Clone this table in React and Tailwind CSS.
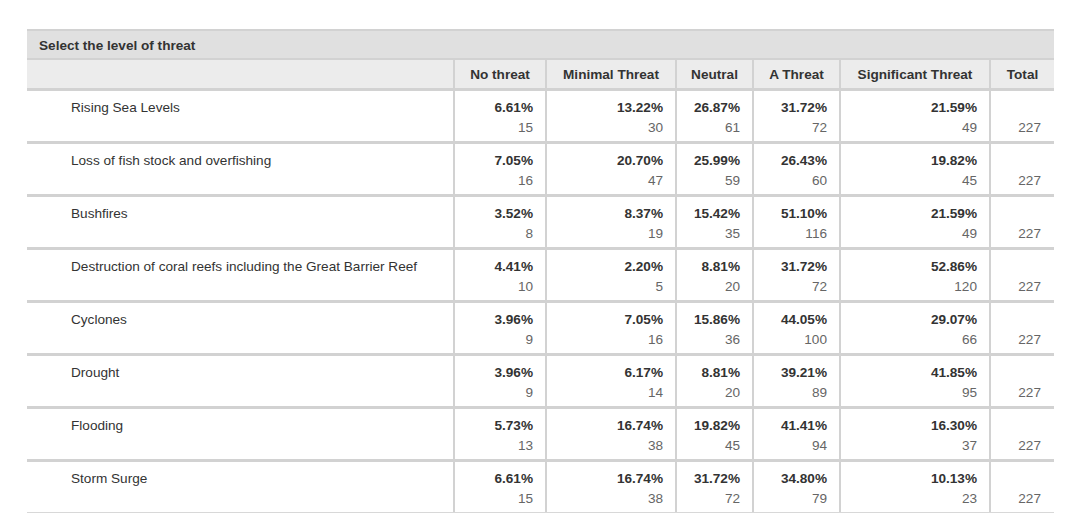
import React from "react";

// Survey results: one row per threat, with percentage + count per answer.
const columns = ["No threat", "Minimal Threat", "Neutral", "A Threat", "Significant Threat"];

const rows = [
  { label: "Rising Sea Levels", pct: ["6.61%", "13.22%", "26.87%", "31.72%", "21.59%"], n: [15, 30, 61, 72, 49] },
  { label: "Loss of fish stock and overfishing", pct: ["7.05%", "20.70%", "25.99%", "26.43%", "19.82%"], n: [16, 47, 59, 60, 45] },
  { label: "Bushfires", pct: ["3.52%", "8.37%", "15.42%", "51.10%", "21.59%"], n: [8, 19, 35, 116, 49] },
  { label: "Destruction of coral reefs including the Great Barrier Reef", pct: ["4.41%", "2.20%", "8.81%", "31.72%", "52.86%"], n: [10, 5, 20, 72, 120] },
  { label: "Cyclones", pct: ["3.96%", "7.05%", "15.86%", "44.05%", "29.07%"], n: [9, 16, 36, 100, 66] },
  { label: "Drought", pct: ["3.96%", "6.17%", "8.81%", "39.21%", "41.85%"], n: [9, 14, 20, 89, 95] },
  { label: "Flooding", pct: ["5.73%", "16.74%", "19.82%", "41.41%", "16.30%"], n: [13, 38, 45, 94, 37] },
  { label: "Storm Surge", pct: ["6.61%", "16.74%", "31.72%", "34.80%", "10.13%"], n: [15, 38, 72, 79, 23] },
];

const HeaderCell = ({ children }) => (
  <div className="h-[28px] bg-[#ececec] pt-[2px] flex items-center justify-center font-bold text-[#333]">
    {children}
  </div>
);

const App = () => {
  return (
    <div className="min-h-[524px] bg-white pt-[29px] pl-[27px] font-['Liberation_Sans',Arial,sans-serif] text-[13.6px] leading-[20px]">
      <div className="w-[1027px] bg-[#d2d2d2] pt-[2px]">
        <div className="h-[27px] bg-[#e0e0e0] pl-3 pt-[2px] flex items-center font-bold text-[#333]">
          Select the level of threat
        </div>

        <div className="mt-[2px] grid grid-cols-[426px_90px_128px_75px_85px_148px_63px] gap-x-[2px] gap-y-[3px] border-b border-[#d8d8d8]">
          <div className="h-[28px] bg-[#ececec]" />
          {columns.map((c) => (
            <HeaderCell key={c}>{c}</HeaderCell>
          ))}
          <HeaderCell>Total</HeaderCell>

          {rows.map((r) => (
            <React.Fragment key={r.label}>
              <div className="h-[50px] bg-white pl-[44px] pt-[7px] text-[#333]">{r.label}</div>
              {r.pct.map((p, i) => (
                <div key={i} className="h-[50px] bg-white pr-[12px] pt-[7px] text-right">
                  <p className="font-bold text-[#333]">{p}</p>
                  <p className="text-[#666]">{r.n[i]}</p>
                </div>
              ))}
              <div className="h-[50px] bg-white pr-[13px] pt-[27px] text-right text-[#666]">227</div>
            </React.Fragment>
          ))}
        </div>
      </div>
    </div>
  );
};

export default App;
